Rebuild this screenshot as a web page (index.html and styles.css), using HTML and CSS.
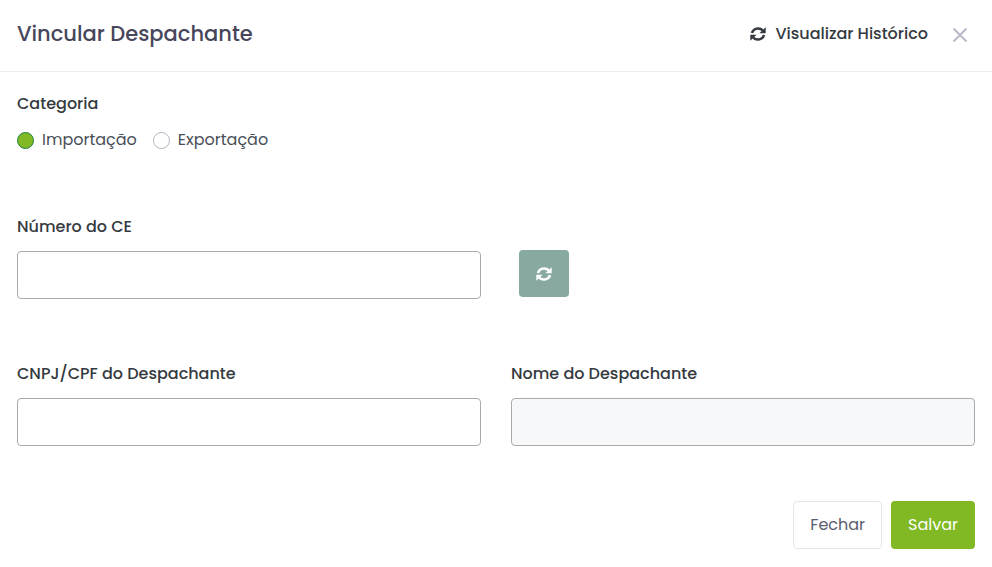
FILE: index.html
```html
<!DOCTYPE html>
<html lang="pt-BR">
<head>
  <meta charset="UTF-8" />
  <meta name="viewport" content="width=device-width, initial-scale=1.0"/>
  <title>Vincular Despachante</title>
  <link rel="stylesheet" href="styles.css">
</head>
<body>
  <header class="modal-header">
    <h1 class="modal-title">Vincular Despachante</h1>
    <div class="header-actions">
      <button type="button" class="history-btn">
        <svg class="icon" viewBox="0 0 16 16" aria-hidden="true">
          <path class="arc" d="M2 7A6.200 5.600 0 0 1 12.800 4.400M14 9A6.200 5.600 0 0 1 3.200 11.600"/>
          <path d="M15.700 1.200V7.200H9.400zM.3 14.800V8.800H6.600z"/>
        </svg>
        Visualizar Histórico
      </button>
      <button type="button" class="close-btn" aria-label="Fechar janela">
        <svg viewBox="0 0 16 16" aria-hidden="true"><path d="M1.500 1.500l13 13M14.500 1.500l-13 13"/></svg>
      </button>
    </div>
  </header>

  <form class="modal-body">
    <fieldset class="field">
      <legend class="label">Categoria</legend>
      <div class="radios">
        <label class="radio"><input type="radio" name="categoria" value="importacao" checked> Importação</label>
        <label class="radio"><input type="radio" name="categoria" value="exportacao"> Exportação</label>
      </div>
    </fieldset>

    <div class="row">
      <div class="field">
        <label class="label" for="numeroCe">Número do CE</label>
        <input type="text" class="input" id="numeroCe">
      </div>
      <div class="refresh">
        <button type="button" class="refresh-btn" aria-label="Atualizar">
          <svg class="icon" viewBox="0 0 16 16" aria-hidden="true">
            <path class="arc" d="M2 7A6.200 5.600 0 0 1 12.800 4.400M14 9A6.200 5.600 0 0 1 3.200 11.600"/>
            <path d="M15.700 1.200V7.200H9.400zM.3 14.800V8.800H6.600z"/>
          </svg>
        </button>
      </div>
    </div>

    <div class="row">
      <div class="field">
        <label class="label" for="documento">CNPJ/CPF do Despachante</label>
        <input type="text" class="input" id="documento">
      </div>
      <div class="field">
        <label class="label" for="nome">Nome do Despachante</label>
        <input type="text" class="input" id="nome" disabled>
      </div>
    </div>

    <div class="footer">
      <button type="button" class="btn btn-light">Fechar</button>
      <button type="submit" class="btn btn-primary">Salvar</button>
    </div>
  </form>
</body>
</html>
```

FILE: styles.css
```css
* {
  box-sizing: border-box;
}
body {
  margin: 0;
  background: #fff;
  color: #3f4254;
  font-family: Poppins, Inter, sans-serif;
  font-size: 16px;
  line-height: 24px;
}
button,
input {
  font: inherit;
}
button {
  cursor: pointer;
}
.modal-header {
  display: flex;
  align-items: center;
  justify-content: space-between;
  padding: 16px 24px 19px 17px;
  border-bottom: 1px solid #ebedf2;
}
.modal-title {
  margin: 0;
  color: #48465b;
  font-size: 21px;
  font-weight: 500;
  line-height: 36px;
}
.header-actions {
  display: flex;
  align-items: center;
  gap: 24px;
}
.history-btn {
  display: flex;
  align-items: center;
  gap: 9px;
  padding: 0;
  border: none;
  background: none;
  color: #343a40;
  font-weight: 500;
}
.icon {
  width: 16px;
  height: 16px;
  fill: currentColor;
}
.arc {
  fill: none;
  stroke: currentColor;
  stroke-width: 2.5;
}
.close-btn {
  display: flex;
  padding: 2px 0 0;
  border: none;
  background: none;
}
.close-btn svg {
  width: 16px;
  height: 16px;
  stroke: #b9b9c9;
  stroke-width: 2;
}
.modal-body {
  padding: 20px 17px 18px;
}
.field {
  display: flex;
  flex-direction: column;
  min-width: 0;
  margin: 0;
  padding: 0;
  border: none;
}
.label {
  margin-bottom: 12px;
  padding: 0;
  color: #343a40;
  font-weight: 500;
}
.radios {
  display: flex;
  gap: 16px;
}
.radio {
  display: flex;
  align-items: center;
  gap: 8px;
  color: #495057;
}
.radio input {
  appearance: none;
  width: 17px;
  height: 17px;
  margin: 0;
  border: 1px solid #adb5bd;
  border-radius: 50%;
  background: #fff;
}
.radio input:checked {
  border-color: #1e7e45;
  background: #80b923;
}
.row {
  display: grid;
  grid-template-columns: 1fr 1fr;
  gap: 30px;
  margin-top: 63px;
}
.input {
  width: 100%;
  height: 48px;
  padding: 0 16px;
  border: 1px solid #aaa;
  border-radius: 4px;
  background: #fff;
}
.input:disabled {
  background: #f7f8fa;
}
.refresh {
  display: flex;
  align-items: flex-end;
  padding: 0 8px 2px;
}
.refresh-btn {
  display: flex;
  align-items: center;
  justify-content: center;
  width: 50px;
  height: 47px;
  border: none;
  border-radius: 4px;
  background: #87a9a1;
  color: #fff;
}
.footer {
  display: flex;
  justify-content: flex-end;
  gap: 9px;
  margin-top: 55px;
}
.btn {
  height: 48px;
  padding: 0 16px;
  border: 1px solid transparent;
  border-radius: 4px;
}
.btn-light {
  border-color: #e2e5ec;
  background: #fff;
  color: #595d6e;
}
.btn-primary {
  background: #80b923;
  color: #fff;
}
```
